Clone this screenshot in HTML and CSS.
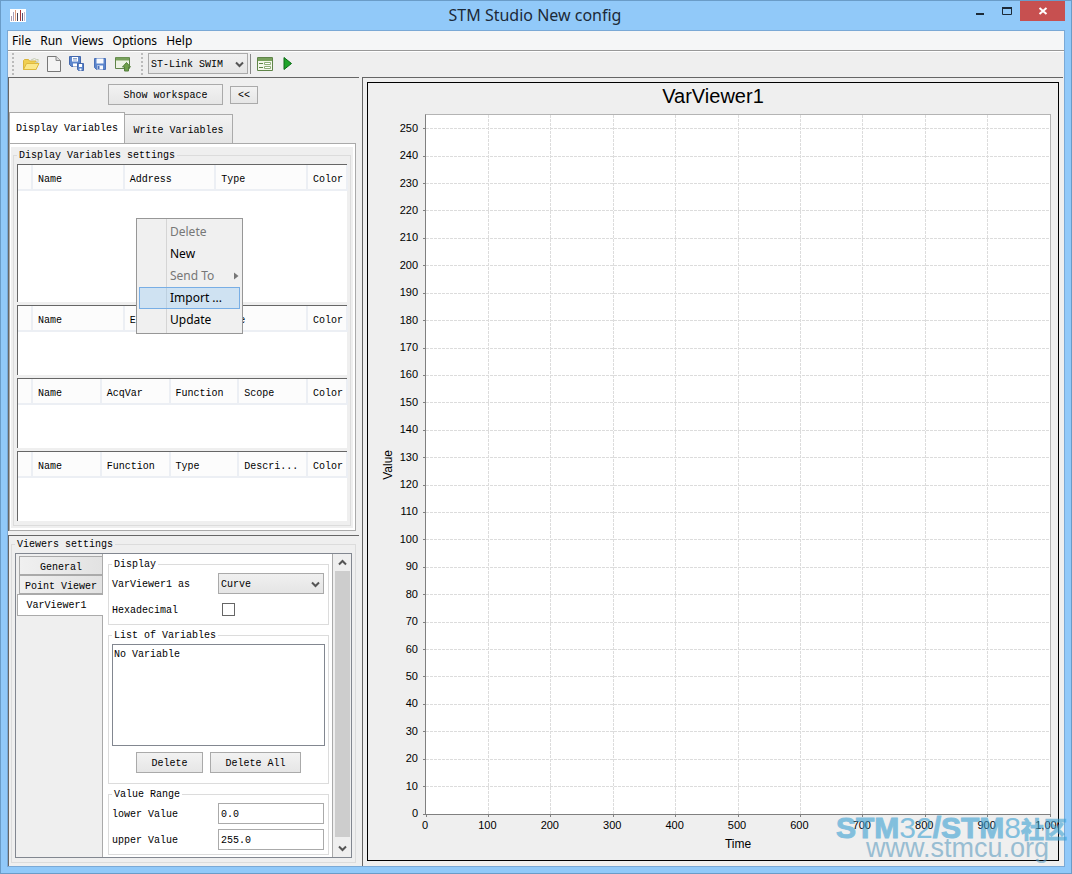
FILE: index.html
```html
<!DOCTYPE html>
<html lang="en">
<head>
    <meta charset="UTF-8">
    <title>STM Studio New config</title>
    <link rel="stylesheet" href="styles.css">
</head>
<body>
<div class="window">
    <header class="titlebar">
        <svg class="app-icon" width="16" height="13" viewBox="0 0 16 13" shape-rendering="crispEdges">
            <rect width="16" height="13" fill="#fff"/>
            <path d="M1.5 7v5" stroke="#a9a"/>
            <path d="M3.5 3v9" stroke="#a8a0b8"/>
            <path d="M5.5 1v11" stroke="#e0a080"/>
            <path d="M7.5 4v8" stroke="#445"/>
            <path d="M10.5 1v11" stroke="#a33"/>
            <path d="M12.5 4v8" stroke="#557"/>
            <path d="M14.5 3v9" stroke="#c8b8c8"/>
        </svg>
        <h1>STM Studio New config</h1>
        <div class="controls">
            <button aria-label="Minimize"><svg width="10" height="10"><path d="M1 8h8" stroke="#1c2a38" stroke-width="2"/></svg></button>
            <button aria-label="Maximize"><svg width="10" height="10"><path d="M0.5 1v7.500h9V1" fill="none" stroke="#1c2a38"/><path d="M0 2h10" stroke="#1c2a38" stroke-width="2"/></svg></button>
            <button class="close" aria-label="Close"><svg width="10" height="10"><path d="M1.500 2l7 6M8.500 2l-7 6" stroke="#fff" stroke-width="2"/></svg></button>
        </div>
    </header>

    <div class="client">
        <nav class="menubar">
            <a href="#">File</a>
            <a href="#">Run</a>
            <a href="#">Views</a>
            <a href="#">Options</a>
            <a href="#">Help</a>
        </nav>

        <div class="toolbar">
            <span class="grip"></span>
            <button aria-label="Open">
                <svg width="18" height="16" viewBox="0 0 18 16">
                    <path d="M1.500 13.500v-9l1-1h4l1 1.500h6.500v8.500z" fill="#f0cf52" stroke="#d9b53c"/>
                    <path d="M9 4q4-3 6 0l1-1v3.500h-3" fill="none" stroke="#c5cbb0"/>
                    <path d="M1.500 13.500L4.500 7.500h12.500l-3 6z" fill="#fbe88a" stroke="#dfb93d"/>
                </svg>
            </button>
            <button aria-label="New">
                <svg width="16" height="18" viewBox="0 0 16 18">
                    <path d="M1.500 1.500h8.500l4.500 4v11h-13z" fill="#f4f4f4" stroke="#777"/>
                    <path d="M10 1.500v4h4.500" fill="#ddd" stroke="#888"/>
                </svg>
            </button>
            <button aria-label="Save all">
                <svg width="16" height="16" viewBox="0 0 16 16">
                    <path d="M0.500 0.500h11v10h-9l-2-2z" fill="#5c86cc" stroke="#4468ad"/>
                    <path d="M3 1h6v4.500H3zM4 7.500h4v3H4z" fill="#fff"/>
                    <path d="M4 2.500h4M4 4h4" stroke="#8aa3cb"/>
                    <path d="M8.500 7.500h6v7h-5l-1-1z" fill="#5c86cc" stroke="#4468ad"/>
                    <path d="M10 8h3v3h-3zM10.500 12.500h2v2h-2z" fill="#fff"/>
                </svg>
            </button>
            <button aria-label="Save">
                <svg width="14" height="14" viewBox="0 0 14 14">
                    <path d="M1.500 1.500h11v11h-9l-2-2z" fill="#5c86cc" stroke="#4a70b8"/>
                    <path d="M3.500 1.500h7v5h-7zM4 8.500h6v4H4z" fill="#f8fafd"/>
                    <path d="M5.500 9v3" stroke="#4a70b8" stroke-width="2"/>
                </svg>
            </button>
            <button aria-label="Export">
                <svg width="16" height="16" viewBox="0 0 16 16">
                    <path d="M0.500 1.500h14v11h-14z" fill="#edf3e4" stroke="#5f8448"/>
                    <path d="M1 3h13" stroke="#78a15c" stroke-width="3"/>
                    <path d="M11.500 6.500l4 4.500h-2v4h-4v-4h-2z" fill="#6fa04a" stroke="#55803c"/>
                </svg>
            </button>
            <span class="grip grip-second"></span>
            <span class="combo combo-link">
                <select aria-label="Link"><option>ST-Link SWIM</option></select>
                <svg width="9" height="7"><path d="M1 1.500l3.500 3.500L8 1.500" fill="none" stroke="#555" stroke-width="2"/></svg>
            </span>
            <span class="divider"></span>
            <button aria-label="Form">
                <svg width="16" height="16" viewBox="0 0 16 16">
                    <path d="M0.500 1.500h15v13h-15z" fill="#f3f7ea" stroke="#5f8448"/>
                    <path d="M1 3.500h14" stroke="#78a15c" stroke-width="3"/>
                    <path d="M2 7.500h4M2 11.500h4" stroke="#5f8448"/>
                    <path d="M7.500 6.500h6v2h-6zM7.500 10.500h6v2h-6z" fill="#fff" stroke="#8fae78"/>
                </svg>
            </button>
            <button aria-label="Start">
                <svg width="10" height="13" viewBox="0 0 10 13"><path d="M1 0.500l7.500 6-7.500 6z" fill="#1fa32a" stroke="#0c6b16"/></svg>
            </button>
        </div>

        <main class="workspace">
            <div class="sidebar">
                <section class="pane variables">
                    <div class="actions">
                        <button class="btn btn-workspace">Show workspace</button>
                        <button class="btn btn-collapse">&lt;&lt;</button>
                    </div>
                    <div class="tabs">
                        <button class="tab active">Display Variables</button>
                        <button class="tab">Write Variables</button>
                    </div>
                    <div class="tab-panel">
                        <div class="tab-body">
                            <fieldset class="group">
                                <legend>Display Variables settings</legend>
                                <div class="grid-box tall">
                                    <table>
                                        <colgroup><col class="c-mark"><col><col><col><col class="c-color"></colgroup>
                                        <tr><th></th><th>Name</th><th>Address</th><th>Type</th><th>Color</th></tr>
                                    </table>
                                </div>
                                <div class="grid-box">
                                    <table>
                                        <colgroup><col class="c-mark"><col><col><col><col class="c-color"></colgroup>
                                        <tr><th></th><th>Name</th><th>Expression</th><th>Type</th><th>Color</th></tr>
                                    </table>
                                </div>
                                <div class="grid-box">
                                    <table>
                                        <colgroup><col class="c-mark"><col><col><col><col><col class="c-color"></colgroup>
                                        <tr><th></th><th>Name</th><th>AcqVar</th><th>Function</th><th>Scope</th><th>Color</th></tr>
                                    </table>
                                </div>
                                <div class="grid-box">
                                    <table>
                                        <colgroup><col class="c-mark"><col><col><col><col><col class="c-color"></colgroup>
                                        <tr><th></th><th>Name</th><th>Function</th><th>Type</th><th>Descri...</th><th>Color</th></tr>
                                    </table>
                                </div>
                            </fieldset>
                        </div>
                    </div>
                </section>

                <section class="pane viewers">
                    <fieldset class="group viewer-settings">
                        <legend>Viewers settings</legend>
                        <div class="scroller">
                            <div class="side-tabs">
                                <button>General</button>
                                <button>Point Viewer</button>
                                <button class="active">VarViewer1</button>
                            </div>
                            <form class="viewer-form">
                                <fieldset class="group">
                                    <legend>Display</legend>
                                    <div class="row">
                                        <label for="viewas">VarViewer1 as</label>
                                        <span class="combo combo-curve">
                                            <select id="viewas"><option>Curve</option></select>
                                            <svg width="9" height="7"><path d="M1 1.500l3.500 3.500L8 1.500" fill="none" stroke="#555" stroke-width="2"/></svg>
                                        </span>
                                    </div>
                                    <div class="row">
                                        <label for="hex">Hexadecimal</label>
                                        <span class="check-cell"><input type="checkbox" id="hex"></span>
                                    </div>
                                </fieldset>
                                <fieldset class="group list-group">
                                    <legend>List of Variables</legend>
                                    <div class="listbox">No Variable</div>
                                    <div class="list-buttons">
                                        <button type="button" class="btn btn-delete">Delete</button>
                                        <button type="button" class="btn btn-delete-all">Delete All</button>
                                    </div>
                                </fieldset>
                                <fieldset class="group">
                                    <legend>Value Range</legend>
                                    <div class="row">
                                        <label for="lower">lower Value</label>
                                        <input type="text" id="lower" value="0.0">
                                    </div>
                                    <div class="row">
                                        <label for="upper">upper Value</label>
                                        <input type="text" id="upper" value="255.0">
                                    </div>
                                </fieldset>
                            </form>
                            <div class="scrollbar">
                                <svg width="9" height="7"><path d="M1 5.500L4.500 2 8 5.500" fill="none" stroke="#555" stroke-width="2"/></svg>
                                <div class="thumb"></div>
                                <svg width="9" height="7"><path d="M1 1.500L4.500 5 8 1.500" fill="none" stroke="#555" stroke-width="2"/></svg>
                            </div>
                        </div>
                    </fieldset>
                </section>
            </div>

            <section class="viewer">
                <div class="chart">
                    <h2>VarViewer1</h2>
                    <div class="y-title"><span>Value</span></div>
                    <div class="plot"><svg id="plot" width="100%" height="100%"></svg></div>
                    <div class="x-title">Time</div>
                </div>
            </section>
        </main>
    </div>

    <div class="context-menu">
        <button disabled>Delete</button>
        <button>New</button>
        <button disabled>Send To<svg width="5" height="8"><path d="M0 0.500v7L4.500 4z" fill="#777"/></svg></button>
        <button class="hover">Import ...</button>
        <button>Update</button>
    </div>

    <div class="watermark">
        <div class="brand"><b>STM</b>32<b>/STM</b>8<b class="cjk">社区</b></div>
        <div class="site">www.stmcu.org</div>
    </div>
</div>

<script>
    const plot = document.getElementById('plot');
    const Y_MAX = 255;
    const X_MAX = 1000;

    function add(name, attrs, text) {
        const el = document.createElementNS('http://www.w3.org/2000/svg', name);
        for (const key in attrs) el.setAttribute(key, attrs[key]);
        if (text) el.textContent = text;
        plot.appendChild(el);
    }

    // horizontal grid + value axis
    for (let v = 0; v <= 250; v += 10) {
        const y = (1 - v / Y_MAX) * 100 + '%';
        if (v) add('line', { x1: 0, x2: '100%', y1: y, y2: y, class: 'grid' });
        add('line', { x1: -3, x2: 0, y1: y, y2: y, class: 'tick' });
        add('text', { x: -8, y: y, dy: 3, 'text-anchor': 'end' }, String(v));
    }

    // vertical grid + time axis
    for (let t = 0; t <= X_MAX; t += 100) {
        const x = t / X_MAX * 100 + '%';
        if (t && t < X_MAX) add('line', { x1: x, x2: x, y1: 0, y2: '100%', class: 'grid' });
        add('svg', { x: x, y: '100%', overflow: 'visible' });
        const mark = plot.lastChild;
        mark.innerHTML = '<line x1="0" x2="0" y1="0" y2="3" class="tick"/><text x="-1" y="15" text-anchor="middle">' + t.toLocaleString('en-US') + '</text>';
    }
</script>
</body>
</html>
```
FILE: styles.css
```css
* {
    box-sizing: border-box;
}

body {
    margin: 0;
    font: 10px/12px "Liberation Mono", monospace;
    color: #000;
}

button, select, input {
    font: inherit;
    color: inherit;
    margin: 0;
    padding: 0;
    border-radius: 0;
}

.window {
    position: relative;
    display: flex;
    flex-direction: column;
    min-height: 100vh;
    padding: 0 6px 6px;
    border: 1px solid #6a9cc8;
    background: #91c9f9;
}

/* title bar */
.titlebar {
    display: flex;
    align-items: flex-start;
    height: 29px;
}

.app-icon {
    margin: 8px 0 0 3px;
}

.titlebar h1 {
    flex: 1;
    margin: 0;
    padding-left: 78px;
    font: 16px/29px "Noto Sans", sans-serif;
    color: #1c2a38;
    text-align: center;
}

.controls {
    display: flex;
}

.controls button {
    width: 27px;
    height: 20px;
    border: 0;
    background: none;
}

.controls .close {
    width: 45px;
    background: #c75050;
}

.controls svg {
    display: block;
    margin: 0 auto;
}

.client {
    flex: 1;
    display: flex;
    flex-direction: column;
    border: 1px solid #7aa9d6;
    background: #efefef;
}

.menubar {
    display: flex;
    gap: 9px;
    height: 20px;
    padding-left: 4px;
    border-bottom: 1px solid #999;
    background: #f5f6f7;
}

.menubar a {
    font: 12px/19px "Noto Sans", sans-serif;
    color: #000;
    text-decoration: none;
}

/* toolbar */
.toolbar {
    display: flex;
    align-items: center;
    height: 26px;
    padding: 0 0 2px 4px;
    border-top: 1px solid #fff;
    background: #efefef;
}

.toolbar button {
    display: flex;
    align-items: center;
    justify-content: center;
    width: 23px;
    height: 22px;
    border: 0;
    background: none;
}

.grip {
    width: 2px;
    height: 22px;
    margin-right: 5px;
    background: repeating-linear-gradient(#bbb 0 2px, transparent 2px 4px);
}

.grip-second {
    margin-left: 7px;
}

.divider {
    width: 1px;
    height: 20px;
    margin: 0 2px;
    background: #888;
}

.combo {
    position: relative;
    display: block;
}

.combo select {
    display: block;
    width: 100%;
    height: 21px;
    padding: 2px 0 0 2px;
    border: 1px solid #aaa;
    background: linear-gradient(#f0f0f0, #e5e5e5);
    appearance: none;
}

.combo svg {
    position: absolute;
    top: 8px;
    right: 4px;
    pointer-events: none;
}

.combo-link {
    width: 100px;
}

.combo-curve {
    width: 106px;
}

/* panes */
.workspace {
    flex: 1;
    display: flex;
}

.sidebar {
    display: flex;
    flex-direction: column;
    flex: none;
    width: 351px;
    gap: 4px;
}

.pane {
    border: solid #666;
    border-width: 1px 0 0 1px;
}

.variables {
    padding-right: 2px;
}

.viewers {
    flex: 1;
    display: flex;
    padding: 2px 3px 3px 2px;
}

.btn {
    height: 21px;
    padding-top: 2px;
    border: 1px solid #aaa;
    background: linear-gradient(#f2f2f2, #e6e6e6);
}

.actions {
    display: flex;
    align-items: center;
    gap: 7px;
    padding: 6px 0 7px 99px;
}

.btn-workspace {
    width: 115px;
}

.btn-collapse {
    width: 28px;
    height: 18px;
}

.tabs {
    display: flex;
    align-items: flex-end;
}

.tab {
    width: 108px;
    height: 29px;
    padding-top: 3px;
    border: 1px solid #aaa;
    border-width: 1px 1px 0 0;
    background: linear-gradient(#f2f2f2, #e4e4e4);
}

.tab.active {
    width: 116px;
    height: 31px;
    padding-top: 2px;
    border-left-width: 1px;
    background: #fff;
}

.tab-panel {
    margin-right: 1px;
    padding: 3px 2px 2px 1px;
    border: 1px solid #aaa;
    background: #fff;
}

.tab-body {
    padding: 2px;
    background: #efefef;
}

/* group boxes */
.group {
    min-width: 0;
    margin: 0;
    padding: 2px 3px 4px;
    border: 1px solid #dcdcdc;
}

.group legend {
    padding: 1px 2px 0;
}

/* variable tables */
.grid-box {
    height: 70px;
    margin-bottom: 3px;
    border: solid #666;
    border-width: 1px 0 0 1px;
    background: #fff;
}

.grid-box.tall {
    height: 138px;
}

.grid-box:last-child {
    margin-bottom: 0;
}

.grid-box table {
    width: 330px;
    table-layout: fixed;
    border-collapse: separate;
    border-spacing: 0;
}

.grid-box th {
    height: 26px;
    padding: 5px 0 0 5px;
    border: solid #eceff4;
    border-width: 0 2px 2px 0;
    background: #fcfcfc;
    font-weight: normal;
    text-align: left;
    white-space: nowrap;
}

.c-mark {
    width: 15px;
}

.c-color {
    width: 40px;
}

/* viewer settings */
.viewer-settings {
    flex: 1;
    display: flex;
}

.scroller {
    flex: 1;
    display: flex;
    width: 100%;
    height: 100%;
    border: 1px solid #828790;
}

.side-tabs {
    width: 87px;
    flex: none;
    display: flex;
    flex-direction: column;
    align-items: flex-end;
    padding-top: 2px;
    margin-right: -1px;
    z-index: 1;
}

.side-tabs button {
    width: 84px;
    height: 19px;
    padding-top: 4px;
    border: 1px solid #aaa;
    background: linear-gradient(90deg, #f0f0f0, #e2e2e2);
}

.side-tabs .active {
    width: 86px;
    height: 22px;
    padding: 2px 8px 0 0;
    border-right: 0;
    background: #fff;
}

.viewer-form {
    flex: 1;
    display: flex;
    flex-direction: column;
    gap: 4px;
    padding: 4px 3px 0 5px;
    border: solid #aaa;
    border-width: 0 1px;
    background: #fff;
}

.row {
    display: flex;
    align-items: center;
    justify-content: space-between;
    height: 21px;
    padding-right: 1px;
}

.row + .row {
    margin-top: 5px;
}

.row label {
    padding-top: 2px;
}

.row input[type="text"] {
    width: 106px;
    height: 21px;
    padding: 2px 2px 0;
    border: 1px solid #aaa;
    background: #fff;
}

.check-cell {
    width: 106px;
    padding-left: 4px;
}

.check-cell input {
    display: block;
    width: 13px;
    height: 13px;
    border: 1px solid #666;
    background: #fff;
    appearance: none;
}

.listbox {
    height: 102px;
    padding: 4px 1px;
    border: 1px solid #828790;
}

.list-group {
    padding-bottom: 10px;
}

.list-buttons {
    display: flex;
    justify-content: center;
    gap: 7px;
    margin-top: 6px;
}

.btn-delete {
    width: 67px;
}

.btn-delete-all {
    width: 91px;
}

.scrollbar {
    display: flex;
    flex-direction: column;
    align-items: center;
    width: 18px;
    padding: 5px 0;
}

.thumb {
    flex: 1;
    width: 15px;
    margin: 5px 0 8px;
    background: #cdcdcd;
}

/* chart */
.viewer {
    flex: 1;
    display: flex;
    margin: 0 1px 0 3px;
    padding: 4px 4px 5px;
    border: solid #666;
    border-width: 1px 0 0 1px;
}

.chart {
    flex: 1;
    display: grid;
    grid-template: 31px 1fr 45px / 57px 1fr 7px;
    border: 1px solid #000;
    overflow: hidden;
    font: 12px/14px "Liberation Sans", sans-serif;
}

.chart h2 {
    grid-column: 1 / -1;
    margin: 0;
    font-size: 20px;
    line-height: 26px;
    font-weight: normal;
    text-align: center;
}

.y-title {
    display: flex;
    align-items: center;
    padding-left: 13px;
}

.y-title span {
    writing-mode: vertical-rl;
    transform: rotate(180deg);
}

.plot {
    border: 1px solid #b4b4b4;
    border-left-color: #808080;
    border-bottom-color: #808080;
    background: #fff;
}

.plot svg {
    display: block;
    overflow: visible;
    font-size: 11px;
}

.grid {
    stroke: #dcdcdc;
    stroke-dasharray: 3 1;
    shape-rendering: crispEdges;
}

.tick {
    stroke: #808080;
    shape-rendering: crispEdges;
}

.x-title {
    grid-column: 2;
    padding-top: 22px;
    text-align: center;
}

/* popup menu over the variable tables */
.context-menu {
    position: absolute;
    left: 135px;
    top: 217px;
    width: 107px;
    padding: 2px;
    border: 1px solid #979797;
    background: linear-gradient(90deg, transparent 29px, #d5d5d5 29px 30px, transparent 30px) #f0f0f0;
}

.context-menu button {
    display: flex;
    align-items: center;
    justify-content: space-between;
    width: 101px;
    height: 22px;
    padding: 0 0 0 30px;
    border: 1px solid transparent;
    background: none;
    font: 12px/20px "Noto Sans", sans-serif;
}

.context-menu button:disabled {
    color: #777;
}

.context-menu .hover {
    border-color: #78aee5;
    background: rgba(145, 201, 247, 0.35);
}

.watermark {
    position: absolute;
    right: 4px;
    bottom: 17px;
    color: #3ba0d2;
    opacity: 0.6;
    font-family: "Liberation Sans", "Noto Sans CJK SC", sans-serif;
    white-space: nowrap;
    pointer-events: none;
}

.brand {
    font-size: 30px;
    line-height: 20px;
}

.brand b {
    -webkit-text-stroke: 1px #3ba0d2;
}

.brand .cjk {
    font-size: 23px;
}

.site {
    padding-right: 18px;
    font-size: 27px;
    line-height: 16px;
    text-align: right;
    color: #5f9cc0;
}
```
